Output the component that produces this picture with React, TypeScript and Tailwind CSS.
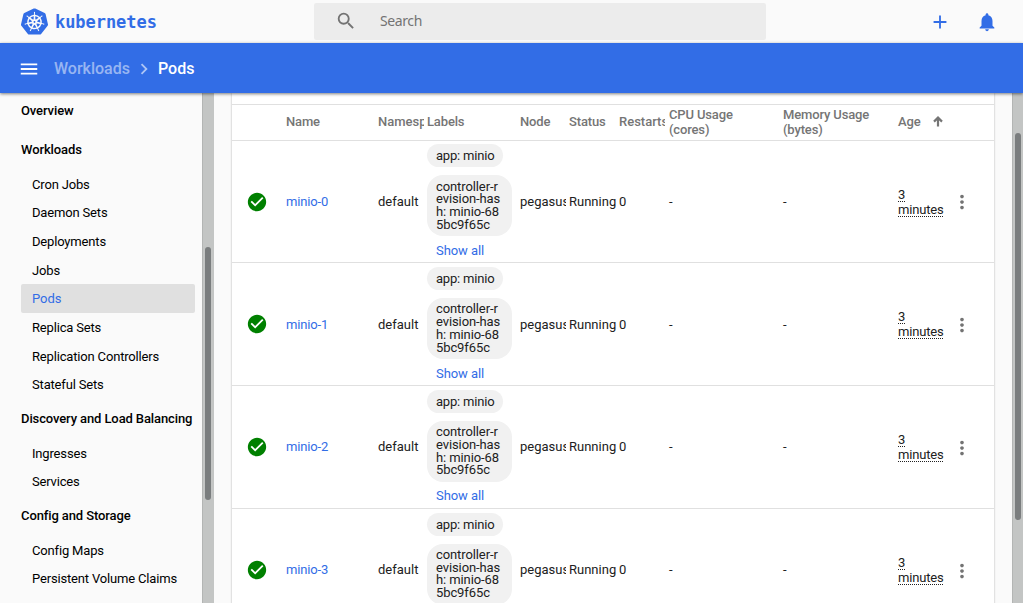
import { SiKubernetes } from "react-icons/si";
import {
  MdAdd,
  MdCheckCircle,
  MdChevronRight,
  MdMenu,
  MdMoreVert,
  MdNotifications,
  MdSearch,
} from "react-icons/md";

type Section = { title: string; items: string[] };

const sections: Section[] = [
  {
    title: "Workloads",
    items: [
      "Cron Jobs",
      "Daemon Sets",
      "Deployments",
      "Jobs",
      "Pods",
      "Replica Sets",
      "Replication Controllers",
      "Stateful Sets",
    ],
  },
  { title: "Discovery and Load Balancing", items: ["Ingresses", "Services"] },
  {
    title: "Config and Storage",
    items: ["Config Maps", "Persistent Volume Claims", "Secrets"],
  },
];

const pods = ["minio-0", "minio-1", "minio-2", "minio-3"];

const columns =
  "grid grid-cols-[54px_92px_49px_93px_49px_50px_50px_114px_115px_53px_43px] items-center";

function TopBar() {
  return (
    <header className="flex h-[43px] shrink-0 items-center bg-[#fafafa] pl-[21px] pr-[25px] text-[#326de6]">
      <div className="flex w-[293px] items-center">
        <SiKubernetes className="size-[27px]" />
        <span className="ml-[7px] font-['DejaVu_Sans_Mono',monospace] text-[17px] leading-[20px] font-bold tracking-[-0.05px]">
          kubernetes
        </span>
      </div>
      <div className="flex h-[37px] w-[452px] items-center rounded-[2px] bg-[#ececec] pl-[21px] text-[#737373]">
        <MdSearch className="mb-[1px] size-[22px]" />
        <span className="ml-[23px] pb-[1px] font-['Noto_Sans',sans-serif] text-[14px] leading-[20px] tracking-[-0.4px]">
          Search
        </span>
      </div>
      <div className="ml-auto flex items-center gap-[25px]">
        <MdAdd className="size-[22px]" />
        <MdNotifications className="size-[22px]" />
      </div>
    </header>
  );
}

function Breadcrumbs() {
  return (
    <div className="z-10 flex h-[50px] shrink-0 items-center bg-[#326de6] pt-[2px] pl-[18px] text-[16px] font-medium text-white shadow-[0_1px_3px_rgba(0,0,0,0.5)]">
      <MdMenu className="size-[22px]" />
      <span className="ml-[14px] w-[79px] text-white/50">Workloads</span>
      <MdChevronRight className="size-[22px] text-white/60" />
      <span className="ml-[3px]">Pods</span>
    </div>
  );
}

function Sidebar() {
  return (
    <nav className="w-[202px] shrink-0 overflow-hidden pl-[21px] pr-[7px] text-[13px] text-black">
      <div className="flex h-[37px] items-center pb-[2px] font-medium tracking-[-0.1px]">Overview</div>
      {sections.map((section) => (
        <div key={section.title}>
          <div className="flex h-[39.8px] items-center pb-[0.6px] font-medium tracking-[-0.11px] whitespace-nowrap">
            {section.title}
          </div>
          {section.items.map((item) => (
            <div
              key={item}
              className={
                item === "Pods"
                  ? "flex h-[28.65px] items-center rounded-[2px] bg-[#e0e0e0] pl-[11px] text-[#326de6]"
                  : "flex h-[28.65px] items-center pt-[0.8px] pl-[11px] tracking-[-0.17px] whitespace-nowrap"
              }
            >
              {item}
            </div>
          ))}
        </div>
      ))}
    </nav>
  );
}

function SortArrow() {
  return (
    <svg viewBox="0 0 10 11" className="ml-[12px] h-[11px] w-[10px]" fill="none" stroke="currentColor" strokeWidth="2.2">
      <path d="M5 10.5V1.5M1 5.6 5 1.6l4 4" />
    </svg>
  );
}

function HeaderRow() {
  return (
    <div className={`${columns} h-[35.5px] border-b border-[#e0e0e0] pb-px font-medium leading-[15px] tracking-[-0.15px] text-[#757575]`}>
      <span />
      <span>Name</span>
      <span className="w-[46px] overflow-hidden tracking-normal">Namespace</span>
      <span>Labels</span>
      <span>Node</span>
      <span>Status</span>
      <span className="w-[46px] overflow-hidden tracking-normal">Restarts</span>
      <span className="w-[80px]">CPU Usage (cores)</span>
      <span className="w-[90px]">Memory Usage (bytes)</span>
      <span className="flex items-center">
        Age
        <SortArrow />
      </span>
    </div>
  );
}

function PodRow({ name }: { name: string }) {
  return (
    <div className={`${columns} h-[122.75px] border-b border-[#e0e0e0] leading-[15px] text-[#212121]`}>
      <MdCheckCircle className="mt-[0.5px] ml-[14px] size-[22px] text-[#008000]" />
      <a className="tracking-[-0.15px] text-[#326de6]">{name}</a>
      <span>default</span>
      <div className="flex flex-col items-start self-start pt-[3.8px]">
        <span className="flex h-[23px] items-center rounded-full bg-[#f1f1f1] px-[9px] tracking-[-0.2px]">
          app: minio
        </span>
        <span className="mt-[8px] flex h-[61px] w-[85px] items-center rounded-[16px] bg-[#f1f1f1] px-[9px] pt-[0.6px] leading-[12.7px]">
          <span className="w-[66px] tracking-[-0.1px] break-all">controller-revision-hash: minio-685bc9f65c</span>
        </span>
        <a className="mt-[6.7px] ml-[9px] tracking-[-0.08px] text-[#326de6]">Show all</a>
      </div>
      <span className="w-[46px] overflow-hidden">pegasus</span>
      <span>Running</span>
      <span>0</span>
      <span>-</span>
      <span>-</span>
      <span className="mt-[0.6px] w-[46px] tracking-[-0.17px] underline decoration-dotted decoration-1 underline-offset-[2px]">
        3 minutes
      </span>
      <MdMoreVert className="mt-[2px] size-[22px] text-[#737373]" />
    </div>
  );
}

export default function App() {
  return (
    <div className="flex h-[603px] w-[1023px] flex-col overflow-hidden bg-[#fafafa] font-[Roboto,sans-serif]">
      <TopBar />
      <Breadcrumbs />
      <div className="flex min-h-0 flex-1">
        <Sidebar />
        <div className="w-[12px] shrink-0 border-l border-[#b3b5b4] bg-[#c3c5c4] pt-[154px] pl-[2px]">
          <div className="h-[253px] w-[6px] rounded-full bg-[#7a7d7e]" />
        </div>
        <main className="flex-1 overflow-hidden px-[18px]">
          <div className="h-[620px] w-[762px] bg-white text-[13px] shadow-[0_0_2px_rgba(0,0,0,0.3)]">
            <div className="h-[12px] border-b border-[#e0e0e0]" />
            <HeaderRow />
            {pods.map((name) => (
              <PodRow key={name} name={name} />
            ))}
          </div>
        </main>
        <div className="w-[11px] shrink-0 border-l border-[#b3b5b4] bg-[#c3c5c4] pt-[40px] pl-[2px]">
          <div className="h-[387px] w-[6px] rounded-full bg-[#7a7d7e]" />
        </div>
      </div>
    </div>
  );
}
